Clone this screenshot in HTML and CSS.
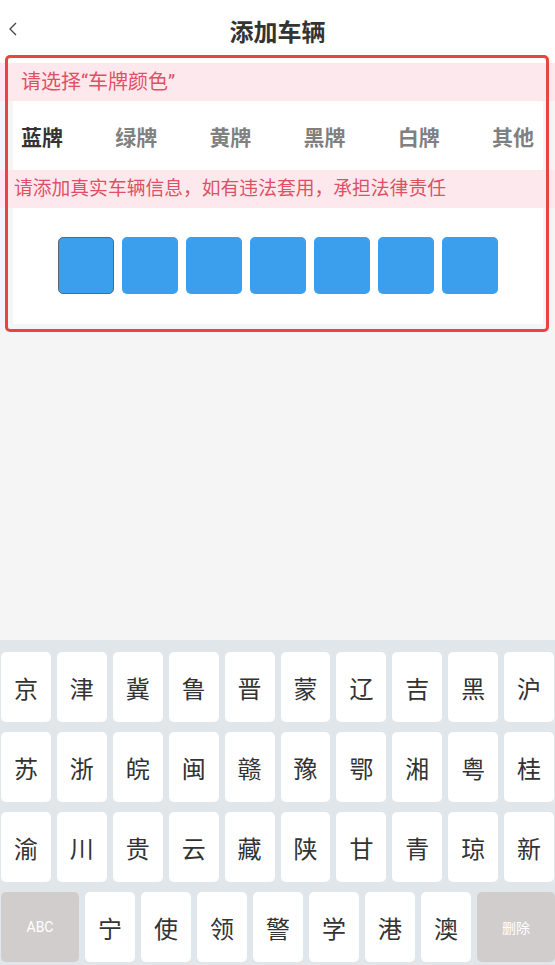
FILE: index.html
```html
<!DOCTYPE html>
<html lang="zh-CN">
<head>
  <meta charset="UTF-8" />
  <meta name="viewport" content="width=device-width, initial-scale=1.0" />
  <title>添加车辆</title>
  <link rel="stylesheet" href="styles.css">
</head>
<body>
  <header class="nav">
    <span class="back">
      <svg width="10" height="16" viewBox="0 0 10 16"><polyline points="8,2 2,8 8,14" fill="none" stroke="#444" stroke-width="1.3"/></svg>
    </span>
    <div class="title">添加车辆</div>
  </header>

  <section class="form">
    <div class="notice first">请选择“车牌颜色”</div>
    <div class="tabs">
      <span class="tab active">蓝牌</span>
      <span class="tab">绿牌</span>
      <span class="tab">黄牌</span>
      <span class="tab">黑牌</span>
      <span class="tab">白牌</span>
      <span class="tab">其他</span>
    </div>
    <div class="notice">请添加真实车辆信息，如有违法套用，承担法律责任</div>
    <div class="plate">
      <div class="cell current"></div>
      <div class="cell"></div>
      <div class="cell"></div>
      <div class="cell"></div>
      <div class="cell"></div>
      <div class="cell"></div>
      <div class="cell"></div>
    </div>
    <div class="highlight"></div>
  </section>

  <div class="keyboard">
    <div class="row">
      <span class="key">京</span><span class="key">津</span><span class="key">冀</span><span class="key">鲁</span><span class="key">晋</span>
      <span class="key">蒙</span><span class="key">辽</span><span class="key">吉</span><span class="key">黑</span><span class="key">沪</span>
    </div>
    <div class="row">
      <span class="key">苏</span><span class="key">浙</span><span class="key">皖</span><span class="key">闽</span><span class="key">赣</span>
      <span class="key">豫</span><span class="key">鄂</span><span class="key">湘</span><span class="key">粤</span><span class="key">桂</span>
    </div>
    <div class="row">
      <span class="key">渝</span><span class="key">川</span><span class="key">贵</span><span class="key">云</span><span class="key">藏</span>
      <span class="key">陕</span><span class="key">甘</span><span class="key">青</span><span class="key">琼</span><span class="key">新</span>
    </div>
    <div class="row last">
      <span class="key fn">ABC</span>
      <span class="key">宁</span><span class="key">使</span><span class="key">领</span><span class="key">警</span>
      <span class="key">学</span><span class="key">港</span><span class="key">澳</span>
      <span class="key fn">删除</span>
    </div>
  </div>
</body>
</html>
```

FILE: styles.css
```css
body {
  margin: 0;
  height: 100vh;
  display: flex;
  flex-direction: column;
  background: #f5f5f5;
  font-family: Roboto, "Noto Sans CJK SC", sans-serif;
  color: #333;
}

.nav {
  height: 63px;
  background: #fff;
  display: flex;
  align-items: center;
  justify-content: center;
  position: relative;
}

.back {
  position: absolute;
  left: 8px;
  top: 21px;
}

.title {
  font-size: 24px;
  font-weight: bold;
  color: #333;
  margin-top: -3px;
}

.form {
  position: relative;
}

.notice {
  height: 38px;
  line-height: 38px;
  background: #fde9ed;
  color: #df5065;
  font-size: 18.8px;
  padding-left: 14px;
  white-space: nowrap;
}

.notice.first {
  padding-left: 21px;
  font-size: 20px;
}

.tabs {
  height: 69px;
  margin: 0 12px 0 13px;
  padding: 0 9px 0 8px;
  background: #fff;
  display: flex;
  align-items: center;
  justify-content: space-between;
}

.tab {
  font-size: 21px;
  font-weight: bold;
  color: #808080;
}

.tab.active {
  color: #333;
}

.plate {
  margin: 0 12px 0 13px;
  padding: 29px 0 30px;
  background: #fff;
  display: flex;
  justify-content: center;
  gap: 8px;
}

.cell {
  width: 56px;
  height: 57px;
  border-radius: 5px;
  background: #3c9fee;
  box-sizing: border-box;
}

.cell.current {
  border: 1.5px solid #5b6878;
}

.highlight {
  position: absolute;
  left: 5px;
  top: -8px;
  width: 544px;
  height: 277px;
  box-sizing: border-box;
  border: 3px solid #e94444;
  border-radius: 5px;
  pointer-events: none;
}

.keyboard {
  margin-top: auto;
  background: #e1e6ea;
  padding: 12px 1px 3px;
  display: flex;
  flex-direction: column;
  gap: 10px;
}

.row {
  display: flex;
  gap: 6px;
}

.key {
  flex: 1;
  height: 70px;
  border-radius: 5px;
  background: #fff;
  display: flex;
  align-items: center;
  justify-content: center;
  font-size: 24px;
  color: #333;
}

.row.last .key {
  flex: 0 0 50px;
}

.row.last .key.fn {
  flex: 0 0 78px;
  background: #d1cdcd;
  color: #fff;
  font-size: 14px;
}
```
